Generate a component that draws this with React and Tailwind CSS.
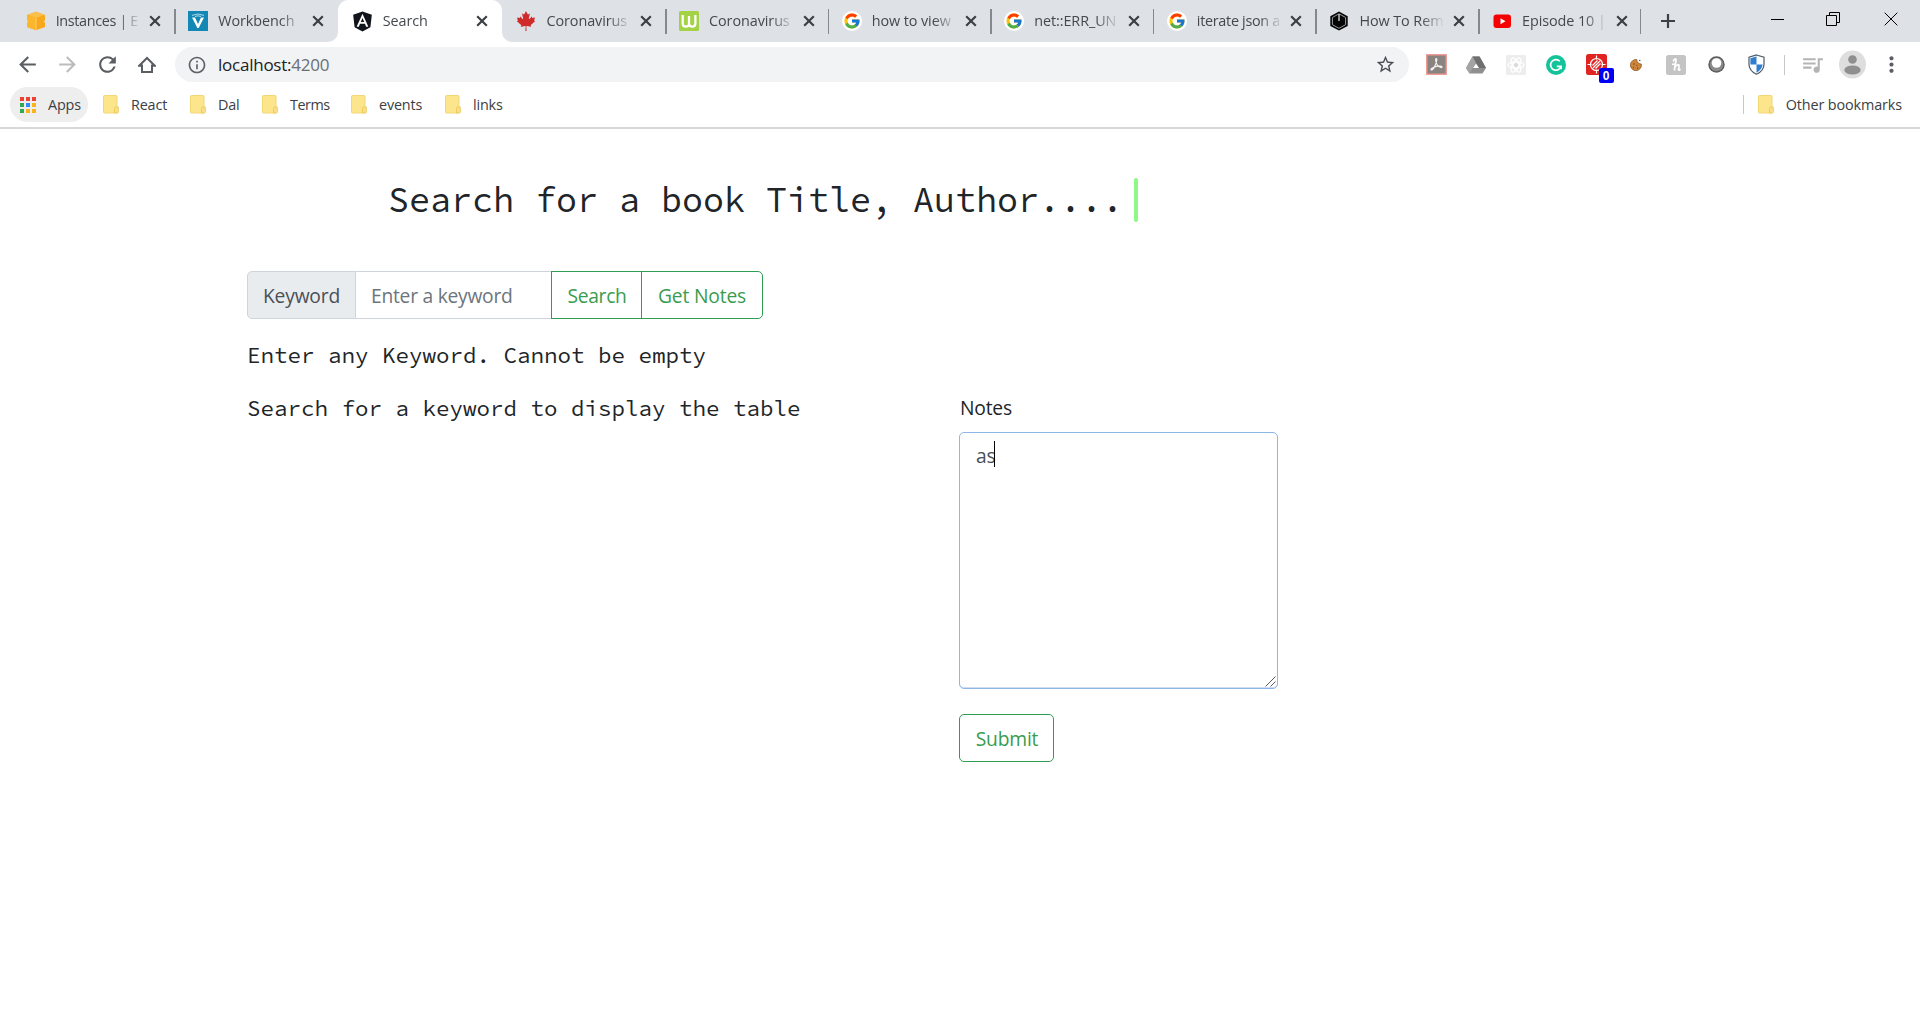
import React from "react";
import { FcGoogle } from "react-icons/fc";
import { FaAngular, FaCanadianMapleLeaf } from "react-icons/fa";
import {
  MdArrowBack,
  MdArrowForward,
  MdRefresh,
  MdInfoOutline,
  MdStarBorder,
  MdQueueMusic,
  MdMoreVert,
} from "react-icons/md";

function AwsIcon() {
  return (
    <svg width="20" height="20" viewBox="0 0 20 20">
      <path d="M1 4 10 .8 19 4v12L10 19.2 1 16z" fill="#f8a91b" />
      <path d="M1 4 10 .8 19 4 10 6.800z" fill="#fbbf4b" />
      <path d="M1 4 10 6.800v12.400L1 16z" fill="#fbb62c" />
      <path d="M10 7v12" stroke="#fbd58a" strokeWidth=".8" fill="none" />
      <path d="M0 9.300 2 10v1L0 11.500zM20 9.300 18 10v1l2 .5z" fill="#dee1e6" />
    </svg>
  );
}

function VIcon() {
  return (
    <svg width="20" height="20" viewBox="0 0 20 20">
      <rect width="20" height="20" fill="#1488b5" />
      <path d="M4 6.400 9.400 17h1.300L16 6.400h-3L10 13 7 6.400z" fill="#fff" />
      <path d="M4 4.400 10 3l6 1.400M7 5.500 10 4.800 13 5.500" fill="none" stroke="#d8ecf5" strokeWidth=".8" />
    </svg>
  );
}

function AngularIcon() {
  return (
    <div className="flex size-[20px] items-center justify-center">
      <FaAngular className="size-[23px] shrink-0 text-[#10151c]" />
    </div>
  );
}

function WIcon() {
  return (
    <svg width="20" height="20" viewBox="0 0 20 20">
      <rect width="20" height="20" rx="1.500" fill="#a3d245" />
      <path d="M3.700 4v8.500q0 3.200 3.200 3.200T10 12.500V5v7.500q0 3.200 3.200 3.200t3.200-3.200V4" fill="none" stroke="#fff" strokeWidth="2.300" />
    </svg>
  );
}

function GoogleIcon() {
  return (
    <div className="flex size-[20px] items-center justify-center rounded-full bg-white">
      <FcGoogle className="size-[18px]" />
    </div>
  );
}

function HexIcon() {
  return (
    <svg width="20" height="20" viewBox="0 0 20 20">
      <path d="M10 .5 18.700 5.300v9.600L10 19.500 1.300 14.900V5.300z" fill="#050505" />
      <path d="M10 2.800 16.600 6.500v7.200L10 17.300 3.400 13.700V6.500z" fill="none" stroke="#a9abad" strokeWidth=".9" />
      <path d="M10 3v7" stroke="#d9dadb" strokeWidth="1.300" />
    </svg>
  );
}

function YoutubeIcon() {
  return (
    <svg width="20" height="20" viewBox="0 0 20 20">
      <rect x="1.500" y="3.500" width="17.500" height="13.500" rx="3" fill="#f60002" />
      <path d="M8.500 7.300v6l5-3z" fill="#fff" />
    </svg>
  );
}

const TABS = [
  { title: "Instances | E", icon: <AwsIcon />, tracking: "tracking-[-0.350px]" },
  { title: "Workbench", icon: <VIcon />, sep: true },
  { title: "Search", icon: <AngularIcon />, active: true },
  { title: "Coronavirus", icon: <FaCanadianMapleLeaf className="size-[20px] text-[#cf2b2b]" /> },
  { title: "Coronavirus", icon: <WIcon />, sep: true },
  { title: "how to view", icon: <GoogleIcon />, sep: true },
  { title: "net::ERR_UN", icon: <GoogleIcon />, sep: true },
  { title: "iterate json a", icon: <GoogleIcon />, sep: true, tracking: "tracking-[-0.300px]" },
  { title: "How To Rem", icon: <HexIcon />, sep: true },
  { title: "Episode 10 |", icon: <YoutubeIcon />, sep: true },
];

function Cross() {
  return (
    <svg width="12" height="12" viewBox="0 0 12 12" className="shrink-0">
      <path d="M1.200 1.200 10.800 10.800M10.800 1.200 1.200 10.800" stroke="#3c4043" strokeWidth="2.200" />
    </svg>
  );
}

function Flare({ right }) {
  return (
    <svg
      width="10"
      height="10"
      viewBox="0 0 10 10"
      className={right ? "absolute bottom-0 -right-[10px] -scale-x-100" : "absolute bottom-0 -left-[10px]"}
    >
      <path d="M10 0v10H0A10 10 0 0 0 10 0z" fill="#fff" />
    </svg>
  );
}

function Tab({ tab }) {
  return (
    <div
      className={
        tab.active
          ? "relative z-10 ml-[0.800px] flex h-[42px] w-[164.800px] shrink-0 items-center rounded-t-[10px] bg-white pl-[15px]"
          : "relative flex h-[42px] w-[162.600px] shrink-0 items-center pl-[14px]"
      }
    >
      {tab.active && <Flare />}
      {tab.active && <Flare right />}
      {tab.sep && <div className="absolute left-0 top-[9px] h-[25px] w-[1.500px] bg-[#85888c]" />}
      <div className="flex size-[20px] shrink-0 items-center justify-center">{tab.icon}</div>
      <div
        className={
          "ml-[10px] w-[90px] shrink-0 whitespace-nowrap text-[14.400px] text-[#45494d] [mask-image:linear-gradient(to_right,black_62px,transparent_86px)] " +
          (tab.tracking || "tracking-[-0.080px]")
        }
      >
        {tab.title}
      </div>
      <div className="ml-[3.500px]">
        <Cross />
      </div>
    </div>
  );
}

function Folder() {
  return (
    <svg width="16" height="19" viewBox="0 0 16 19" className="shrink-0">
      <rect x=".5" y=".5" width="13.500" height="17.500" rx="1" fill="#fde58c" stroke="#f1d774" />
      <path d="M11.500 18v-4.500q0-1.500 1.500-1.500h2.300V17q0 1-1 1z" fill="#fbe08a" stroke="#e9c95b" strokeWidth=".9" />
    </svg>
  );
}

const BOOKMARKS = [
  { label: "React", className: "ml-[15px] w-[87px]" },
  { label: "Dal", className: "w-[72px]" },
  { label: "Terms", className: "w-[89px] tracking-[-0.500px]" },
  { label: "events", className: "w-[94px]" },
  { label: "links", className: "w-[80px]" },
];

const APP_DOTS = ["#ea4335", "#ea4335", "#ea4335", "#34a853", "#2f8df5", "#fbb31b", "#34a853", "#fbb31b", "#fbb31b"];

const EXTENSIONS = [
  <svg key="acrobat" width="21" height="21" viewBox="0 0 21 21">
    <rect x=".8" y=".8" width="19.400" height="19.400" fill="#8a8481" stroke="#f0938d" strokeWidth="1.400" />
    <path d="M10.200 4.500c1.200 0 .6 2.500-.4 5.200S6.500 16.300 5.200 16c-1.200-.5 1.800-2.800 5.300-3.600s5.900-.2 5.500.9-3-.2-4.600-2.300S9 4.500 10.200 4.500z" fill="none" stroke="#f4f2f1" strokeWidth="1.100" />
  </svg>,
  <svg key="drive" width="20" height="18" viewBox="0 0 20 18">
    <path d="M6.500.5h7L20 12l-3.500 5.500h-13L0 12z" fill="#8f8f8f" />
    <path d="M6.500.5 0 12l3.500 5.500L10 6z" fill="#a4a4a4" />
    <path d="M6.500.5h7L20 12h-7z" fill="#6f6f6f" />
    <path d="M10 7.500 13 12H7z" fill="#fff" />
  </svg>,
  <svg key="react" width="20" height="20" viewBox="0 0 20 20">
    <rect width="20" height="20" rx="1" fill="#ededed" />
    <g fill="none" stroke="#fff" strokeWidth="1.300">
      <ellipse cx="10" cy="10" rx="8" ry="3.200" />
      <ellipse cx="10" cy="10" rx="8" ry="3.200" transform="rotate(60 10 10)" />
      <ellipse cx="10" cy="10" rx="8" ry="3.200" transform="rotate(120 10 10)" />
    </g>
    <circle cx="10" cy="10" r="1.800" fill="#d8d8d8" />
  </svg>,
  <svg key="grammarly" width="20" height="20" viewBox="0 0 20 20">
    <circle cx="10" cy="10" r="10" fill="#15c39a" />
    <path d="M13.800 6.300A5.300 5.300 0 1 0 15 11.300M10.800 11.300h4.300v3" fill="none" stroke="#fff" strokeWidth="1.700" />
  </svg>,
  <div key="blocker" className="relative size-[21px]">
    <svg width="21" height="21" viewBox="0 0 21 21">
      <rect width="21" height="21" rx="2.500" fill="#e02421" />
      <g fill="none" stroke="#fff" strokeWidth="1.200">
        <circle cx="10.500" cy="10.500" r="6" />
        <path d="M10.500 1.500v4M10.500 15.500v4M1.500 10.500h4M15.500 10.500h4M7 14l7-7M6.500 11.500l5-5M9.500 14.500l5-5" />
      </g>
    </svg>
    <div className="absolute left-[13px] top-[14px] flex h-[15px] w-[15px] items-center justify-center rounded-[2px] bg-[#0000f5] font-['Liberation_Sans'] text-[12px] font-bold leading-none text-white">
      0
    </div>
  </div>,
  <svg key="cookie" width="12" height="12" viewBox="0 0 12 12">
    <path d="M7 .7Q6 3 8 3.300q.5 2 3.300 1.700A5.500 5.500 0 1 1 7 .7z" fill="#cf8639" stroke="#8a5726" strokeWidth=".8" />
    <g fill="#6b4018">
      <circle cx="4" cy="5" r=".7" />
      <circle cx="3.500" cy="8.300" r=".6" />
      <circle cx="6.800" cy="6.300" r=".6" />
      <circle cx="7.500" cy="9" r=".7" />
      <circle cx="9.800" cy="1.500" r=".7" />
    </g>
  </svg>,
  <svg key="honey" width="20" height="20" viewBox="0 0 20 20">
    <rect width="20" height="20" rx="2.500" fill="#c4c4c4" />
    <path d="M8.300 15.500 10 5.500q.3-2-1-1.500T7.300 6.500M6 9.300l3.500-.3M9 12q3.800-3.800 4-1.200T12.300 14.500q.5 1.300 2.200-.3" fill="none" stroke="#fff" strokeWidth="1.700" />
  </svg>,
  <svg key="ring" width="17" height="17" viewBox="0 0 17 17">
    <circle cx="8.500" cy="8.500" r="8.200" fill="#5c5c5c" />
    <circle cx="8.500" cy="8.500" r="6.800" fill="#8b8b8b" />
    <circle cx="8.500" cy="7" r="4.800" fill="#fff" />
  </svg>,
  <svg key="shield" width="17" height="21" viewBox="0 0 17 21">
    <path d="M8.500 1 16 3.200v7q0 6.500-7.500 10-7.500-3.500-7.500-10v-7z" fill="#fff" stroke="#4c5a68" strokeWidth="1.200" />
    <path d="M8.500 2.500v8H2.400V4.200zM8.500 10.500h6.100q-.5 5-6.100 8.200z" fill="#2f7fd0" />
  </svg>,
];

const OUTLINE = "border border-[#2f9e55] pt-[2px] text-[#3a9c50]";

export default function App() {
  return (
    <div className="h-[1029px] w-[1920px] overflow-hidden bg-white font-['Open_Sans',sans-serif]">
      <header className="flex h-[42px] bg-[#dee1e6] pl-[11.700px]">
        {TABS.map((tab, i) => (
          <Tab key={i} tab={tab} />
        ))}
        <div className="-ml-px mt-[9px] h-[25px] w-[1.500px] bg-[#85888c]" />
        <svg width="14" height="14" viewBox="0 0 14 14" className="ml-[20px] mt-[14px]">
          <path d="M7 0v14M0 7h14" stroke="#3c4043" strokeWidth="2.200" />
        </svg>
        <div className="ml-auto mr-[22px] mt-[12px] flex h-[14px] items-center">
          <div className="mr-[42px] h-px w-[13px] bg-black" />
          <svg width="14" height="14" viewBox="0 0 14 14" className="mr-[44px]">
            <path d="M.5 3.500h10v10H.5zM3.500 3.500v-3h10v10h-3" fill="none" stroke="#000" />
          </svg>
          <svg width="14" height="14" viewBox="0 0 14 14">
            <path d="M.7.7l12.600 12.600M13.300.7.7 13.300" stroke="#000" />
          </svg>
        </div>
      </header>

      <div className="flex h-[45px] items-center">
        <MdArrowBack className="ml-[15px] size-[25px] text-[#5a5d61]" />
        <MdArrowForward className="ml-[15px] size-[25px] text-[#babcbe]" />
        <MdRefresh className="ml-[15px] size-[25px] text-[#5a5d61]" />
        <svg width="18" height="18" viewBox="0 0 18 18" className="ml-[18px]">
          <path d="M4 8.500V16h10V8.500M1.200 9.700 9 2l7.800 7.700z" fill="none" stroke="#5a5d61" strokeWidth="2" />
          <path d="M5 8h8v3H5z" fill="#fff" />
        </svg>
        <div className="ml-[19px] flex h-[35px] w-[1234px] items-center rounded-full bg-[#f1f3f4] pl-[12px] pr-[13px]">
          <MdInfoOutline className="size-[20px] text-[#5f6368]" />
          <div className="ml-[11px] text-[17px] tracking-[-0.240px] text-[#202124]">
            localhost:<span className="text-[#6b6f73]">4200</span>
          </div>
          <MdStarBorder className="ml-auto size-[21px] text-[#4a4d51]" />
        </div>
        <div className="ml-[7px] flex">
          {EXTENSIONS.map((ext, i) => (
            <div key={i} className="flex h-[21px] w-[40px] items-center justify-center">
              {ext}
            </div>
          ))}
        </div>
        <div className="ml-[8px] h-[20px] w-px bg-[#c6c8ca]" />
        <MdQueueMusic className="ml-[15px] size-[25px] text-[#b4b4b4]" />
        <svg width="27" height="29" viewBox="0 0 27 29" className="ml-[14px]">
          <ellipse cx="13.500" cy="14.500" rx="13.500" ry="14" fill="#dedede" />
          <circle cx="13.500" cy="9.500" r="4.300" fill="#8f8f8f" />
          <ellipse cx="13.500" cy="20" rx="8.200" ry="4.500" fill="#8f8f8f" />
        </svg>
        <MdMoreVert className="ml-[13px] size-[25px] text-[#5a5d61]" />
      </div>

      <nav className="flex h-[42px] items-start border-b-2 border-[#d7d8da] text-[14.400px] tracking-[-0.180px] text-[#3c4043]">
        <div className="ml-[10px] flex h-[35px] w-[78px] items-center rounded-full bg-[#eeeeee] pl-[10px]">
          <div className="grid grid-cols-3 gap-[2px]">
            {APP_DOTS.map((c, i) => (
              <div key={i} className="size-[4px]" style={{ backgroundColor: c }} />
            ))}
          </div>
          <div className="ml-[12px]">Apps</div>
        </div>
        {BOOKMARKS.map((b) => (
          <div key={b.label} className={"flex h-[35px] shrink-0 items-center " + b.className}>
            <Folder />
            <div className="ml-[12px]">{b.label}</div>
          </div>
        ))}
        <div className="ml-auto mr-[18px] flex h-[35px] items-center">
          <div className="h-[19px] w-px bg-[#c6c8ca]" />
          <div className="w-[14px]" />
          <Folder />
          <div className="ml-[12px] tracking-[-0.120px]">Other bookmarks</div>
        </div>
      </nav>

      <main className="pl-[247px] pt-[49px] text-[19.250px] tracking-[-0.200px]">
        <div className="flex h-[44px] items-center pl-[141px] font-['Source_Code_Pro','DejaVu_Sans_Mono',monospace] text-[35px] tracking-normal text-[#212529]">
          <h1 className="whitespace-nowrap leading-[44px]">Search for a book Title, Author....</h1>
          <div className="ml-[11px] h-[44px] w-[4px] rounded-[2px] bg-[#8df986]" />
        </div>

        <div className="mt-[49px] flex h-[48px] w-[516px]">
          <div className="flex w-[109px] items-center rounded-l-[5px] border border-[#ced4da] bg-[#e9ecef] pl-[15px] pt-[2px] text-[#495057]">
            Keyword
          </div>
          <input
            placeholder="Enter a keyword"
            className="w-[195px] border-y border-[#ced4da] pl-[15px] pt-[2px] tracking-[-0.260px] text-[#495057] outline-none placeholder:text-[#6c757d]"
          />
          <button className={"w-[91px] pl-[1px] tracking-[-0.300px] " + OUTLINE}>Search</button>
          <button className={"-ml-px w-[122px] rounded-r-[5px] tracking-[-0.150px] " + OUTLINE}>Get Notes</button>
        </div>

        <p className="mt-[22px] h-[28px] font-['Source_Code_Pro','DejaVu_Sans_Mono',monospace] text-[22.500px] leading-[28px] tracking-normal text-[#212529]">
          Enter any Keyword. Cannot be empty
        </p>

        <div className="mt-[25px] flex">
          <p className="w-[712px] font-['Source_Code_Pro','DejaVu_Sans_Mono',monospace] text-[22.500px] leading-[28px] tracking-normal text-[#212529]">
            Search for a keyword to display the table
          </p>
          <div>
            <label className="block h-[27px] pl-[1px] leading-[27px] text-[#212529]">Notes</label>
            <div className="relative mt-[11px] h-[257px] w-[319px]">
              <textarea
                defaultValue="as"
                className="block h-full w-full resize-none rounded-[5px] border border-[#8db7e6] px-[16px] pt-[8px] leading-[30px] tracking-[-0.200px] text-[#495057] shadow-[inset_0_-1px_0_#cfdcf3] outline-none"
              />
              <div className="absolute left-[35px] top-[9px] h-[26px] w-px bg-black" />
              <svg width="11" height="11" viewBox="0 0 11 11" className="absolute bottom-[2px] right-[2px]">
                <path d="M.5 10.500l10-10M5.500 10.500l5-5" stroke="#55585c" fill="none" />
              </svg>
            </div>
            <button className={"mt-[25px] h-[48px] w-[95px] rounded-[5px] pl-[1px] tracking-[-0.200px] " + OUTLINE}>Submit</button>
          </div>
        </div>
      </main>
    </div>
  );
}
